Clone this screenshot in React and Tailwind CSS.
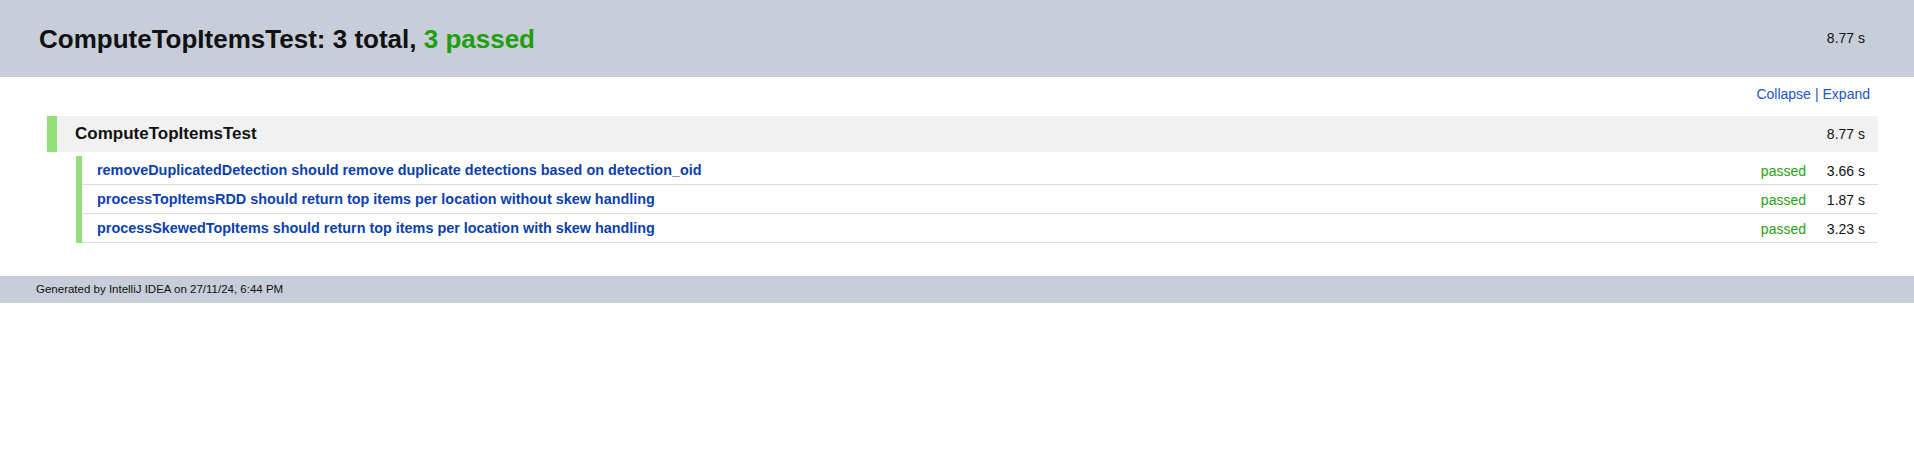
import React from 'react';

const tests = [
  { name: 'removeDuplicatedDetection should remove duplicate detections based on detection_oid', time: '3.66 s' },
  { name: 'processTopItemsRDD should return top items per location without skew handling', time: '1.87 s' },
  { name: 'processSkewedTopItems should return top items per location with skew handling', time: '3.23 s' },
];

export default function App() {
  return (
    <div className="min-h-screen bg-white font-['Arial','Liberation_Sans',sans-serif] text-[#111]">
      {/* Header */}
      <div className="flex h-[77px] items-center justify-between bg-[#c7cdd9] pl-[39px] pr-[49px]">
        <h1 className="text-[26px] font-bold leading-[30px]">
          ComputeTopItemsTest: 3 total, <span className="text-[#1e9f0c]">3 passed</span>
        </h1>
        <span className="text-[14px]">8.77 s</span>
      </div>

      {/* Collapse | Expand */}
      <div className="flex h-[39px] justify-end pr-[44px] pt-[9px] text-[14px] leading-[16px] text-[#1a56c4]">
        <a href="#" className="hover:underline">Collapse</a>
        <span className="px-[4px] text-[#1a56c4]">|</span>
        <a href="#" className="hover:underline">Expand</a>
      </div>

      {/* Suite */}
      <div className="ml-[47px] mr-[36px]">
        <div className="flex h-[36px] items-center justify-between border-l-[10px] border-[#92df78] bg-[#f1f1f1] pl-[18px] pr-[13px]">
          <span className="text-[17px] font-bold">ComputeTopItemsTest</span>
          <span className="text-[14px]">8.77 s</span>
        </div>

        <div className="ml-[29px] mt-[4px] border-l-[6px] border-[#92df78]">
          {tests.map((t) => (
            <div key={t.name} className="flex h-[29px] items-center border-b border-[#dcdcdc] pl-[15px] pr-[13px] pt-[2px]">
              <span className="flex-1 text-[14.4px] font-bold text-[#0c3fae]">{t.name}</span>
              <span className="text-[14px] text-[#2aa114]">passed</span>
              <span className="w-[59px] text-right text-[14px]">{t.time}</span>
            </div>
          ))}
        </div>
      </div>

      {/* Footer */}
      <div className="mt-[33px] flex h-[27px] items-center bg-[#c7cdd9] pl-[36px] text-[11.5px]">
        Generated by IntelliJ IDEA on 27/11/24, 6:44 PM
      </div>
    </div>
  );
}
